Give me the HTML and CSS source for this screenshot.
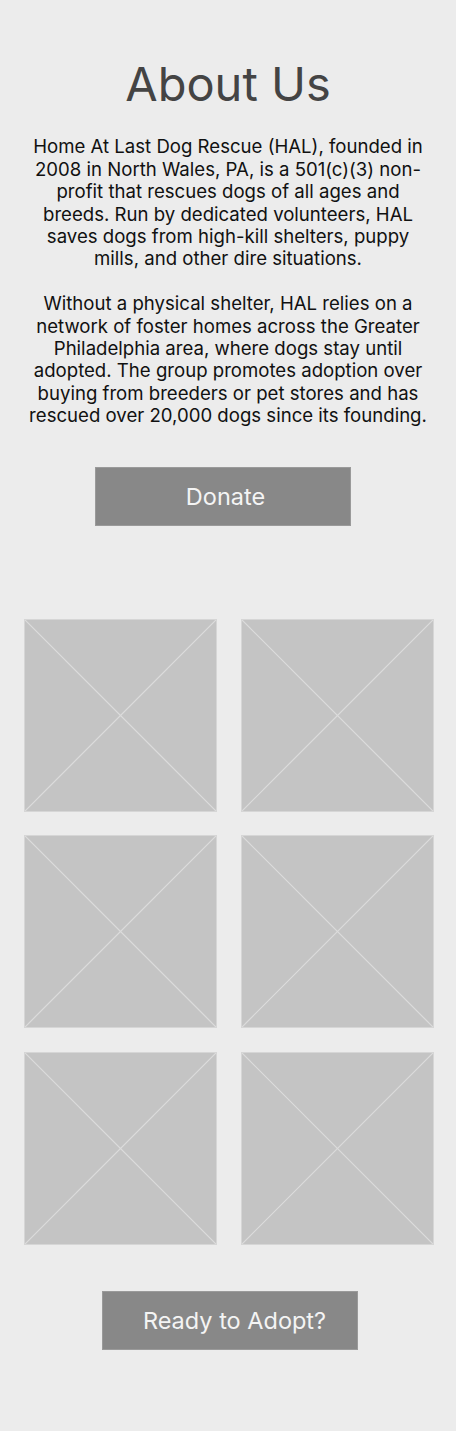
FILE: index.html
```html
<!DOCTYPE html>
<html lang="en">
<head>
    <meta charset="UTF-8">
    <meta name="viewport" content="width=device-width, initial-scale=1.0">
    <title>About Us - Home At Last Dog Rescue</title>
    <link rel="stylesheet" href="styles.css">
</head>
<body>
    <div id="page">
        <h1 class="title">About Us</h1>

        <!-- Over de organisatie -->
        <div class="intro">
            <p>Home At Last Dog Rescue (HAL), founded in 2008 in North Wales, PA, is a 501(c)(3) non-profit that rescues dogs of all ages and breeds. Run by dedicated volunteers, HAL saves dogs from high-kill shelters, puppy mills, and other dire situations.</p>
            <p>Without a physical shelter, HAL relies on a network of foster homes across the Greater Philadelphia area, where dogs stay until adopted. The group promotes adoption over buying from breeders or pet stores and has rescued over 20,000 dogs since its founding.</p>
        </div>

        <button class="btn donate">Donate</button>

        <!-- Foto placeholders -->
        <div class="gallery">
            <div class="photo"><svg viewBox="0 0 100 100" preserveAspectRatio="none"><line x1="0" y1="0" x2="100" y2="100"/><line x1="100" y1="0" x2="0" y2="100"/></svg></div>
            <div class="photo"><svg viewBox="0 0 100 100" preserveAspectRatio="none"><line x1="0" y1="0" x2="100" y2="100"/><line x1="100" y1="0" x2="0" y2="100"/></svg></div>
            <div class="photo"><svg viewBox="0 0 100 100" preserveAspectRatio="none"><line x1="0" y1="0" x2="100" y2="100"/><line x1="100" y1="0" x2="0" y2="100"/></svg></div>
            <div class="photo"><svg viewBox="0 0 100 100" preserveAspectRatio="none"><line x1="0" y1="0" x2="100" y2="100"/><line x1="100" y1="0" x2="0" y2="100"/></svg></div>
            <div class="photo"><svg viewBox="0 0 100 100" preserveAspectRatio="none"><line x1="0" y1="0" x2="100" y2="100"/><line x1="100" y1="0" x2="0" y2="100"/></svg></div>
            <div class="photo"><svg viewBox="0 0 100 100" preserveAspectRatio="none"><line x1="0" y1="0" x2="100" y2="100"/><line x1="100" y1="0" x2="0" y2="100"/></svg></div>
        </div>

        <button class="btn adopt">Ready to Adopt?</button>
    </div>
</body>
</html>
```

FILE: styles.css
```css
body {
    font-family: 'Inter', 'Liberation Sans', sans-serif;
    background-color: #ececec;
    margin: 0;
}

#page {
    display: flex;
    flex-direction: column;
    align-items: center;
    padding: 56px 26px 80px;
}

.title {
    font-size: 47px;
    font-weight: 400;
    color: #444;
    margin: 0 0 23px;
    line-height: 1.2;
}

.intro {
    text-align: center;
    font-size: 18.6px;
    line-height: 22.4px;
    color: #111;
}

.intro p {
    margin: 0 0 22.4px;
}

.intro p:last-child {
    margin-bottom: 0;
}

.btn {
    font-family: inherit;
    background-color: #888;
    color: #f4f4f4;
    border: 1px solid #9a9a9a;
    width: 256px;
    height: 59px;
    font-size: 23.5px;
    cursor: pointer;
}

.donate {
    margin-top: 40px;
    margin-right: 11px;
    padding-left: 12px;
}

.adopt {
    margin-top: 46px;
    margin-left: 4px;
    padding-left: 15px;
}

.gallery {
    display: grid;
    grid-template-columns: 193px 193px;
    gap: 23.5px 24px;
    margin-top: 93px;
    margin-left: 2px;
}

.photo {
    width: 193px;
    height: 193px;
    box-sizing: border-box;
    background-color: #c4c4c4;
    border: 1px solid #d6d6d6;
}

.photo svg {
    display: block;
    width: 100%;
    height: 100%;
}

.photo line {
    stroke: #dcdcdc;
    stroke-width: 1.2;
    vector-effect: non-scaling-stroke;
}
```
